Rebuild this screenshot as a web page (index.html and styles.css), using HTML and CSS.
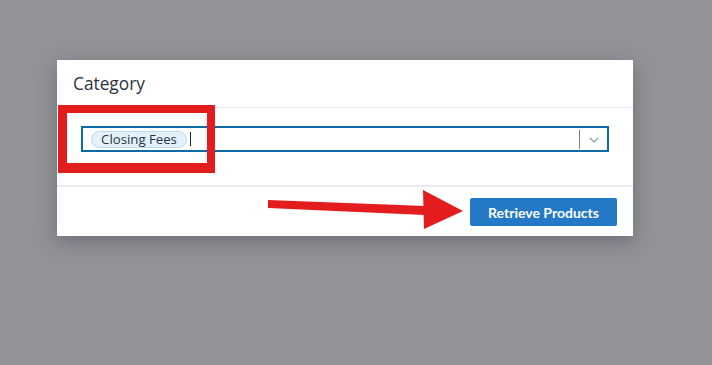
FILE: index.html
```html
<!DOCTYPE html>
<html>
<head>
<meta charset="utf-8">
<link rel="stylesheet" href="styles.css">
</head>
<body>
<div class="modal">
  <div class="modal-header">Category</div>
  <div class="modal-body">
    <div class="select">
      <div class="values">
        <span class="pill">Closing Fees</span>
        <span class="caret"></span>
      </div>
      <div class="indicators">
        <span class="sep"></span>
        <svg class="chev" width="10" height="6" viewBox="0 0 10 6"><path d="M1 1 L5 5 L9 1" fill="none" stroke="#7f9bb8" stroke-width="1.2"/></svg>
      </div>
    </div>
  </div>
  <div class="modal-footer">
    <button class="btn">Retrieve Products</button>
  </div>
</div>
<div class="annot-box"></div>
<svg class="annot-arrow" width="712" height="365" viewBox="0 0 712 365">
  <polygon points="268,200 425,206 425,215 268,208" fill="#e31c1e"/>
  <polygon points="423,190 463,211 424,229" fill="#e31c1e"/>
</svg>
</body>
</html>
```
FILE: styles.css
```css
html, body {
  margin: 0;
  padding: 0;
}
body {
  width: 712px;
  height: 365px;
  background: #929397;
  font-family: "Open Sans", "Liberation Sans", sans-serif;
  position: relative;
  overflow: hidden;
  padding-top: 60px;
  box-sizing: border-box;
}
.modal {
  margin-left: 57px;
  width: 576px;
  height: 176px;
  background: #fff;
  box-shadow: 0 6px 18px rgba(40, 44, 60, 0.35);
  display: flex;
  flex-direction: column;
}
.modal-header {
  height: 47px;
  border-bottom: 1px solid #e6e6e8;
  padding-left: 16px;
  font-size: 17.3px;
  color: #2a3340;
  display: flex;
  align-items: center;
  box-sizing: content-box;
}
.modal-body {
  height: 79px;
  border-bottom: 2px solid #ececee;
  padding: 18px 24px 0;
  box-sizing: border-box;
}
.select {
  height: 26px;
  border: 2px solid #0f6aa8;
  box-sizing: border-box;
  display: flex;
  align-items: center;
}
.values {
  flex: 1;
  display: flex;
  align-items: center;
  padding-left: 8px;
}
.pill {
  height: 17px;
  width: 96px;
  box-sizing: border-box;
  border: 1px solid #b8d8f3;
  background: #e4f1fc;
  border-radius: 9px;
  font-size: 13.2px;
  color: #233445;
  display: flex;
  align-items: center;
  justify-content: center;
}
.caret {
  width: 1px;
  height: 14px;
  background: #222;
  margin-left: 3px;
}
.indicators {
  display: flex;
  align-items: center;
  height: 100%;
}
.sep {
  width: 1px;
  height: 19px;
  background: #7a7f88;
}
.chev {
  margin: 1px 8px 0 9px;
}
.modal-footer {
  flex: 1;
  display: flex;
  justify-content: flex-end;
  align-items: flex-start;
  padding: 11px 16px 0 0;
}
.btn {
  width: 147px;
  height: 28px;
  background: #2379c6;
  border: none;
  border-radius: 2px;
  color: #fff;
  font-family: "Lato", "Liberation Sans", sans-serif;
  font-weight: 700;
  font-size: 14px;
  padding: 0;
}
.annot-box {
  position: absolute;
  left: 58px;
  top: 105px;
  width: 157px;
  height: 68px;
  box-sizing: border-box;
  border: 9px solid #e31c1e;
  border-right-width: 8px;
  border-top-width: 8px;
  border-bottom-width: 10px;
}
.annot-arrow {
  position: absolute;
  left: 0;
  top: 0;
}
```
